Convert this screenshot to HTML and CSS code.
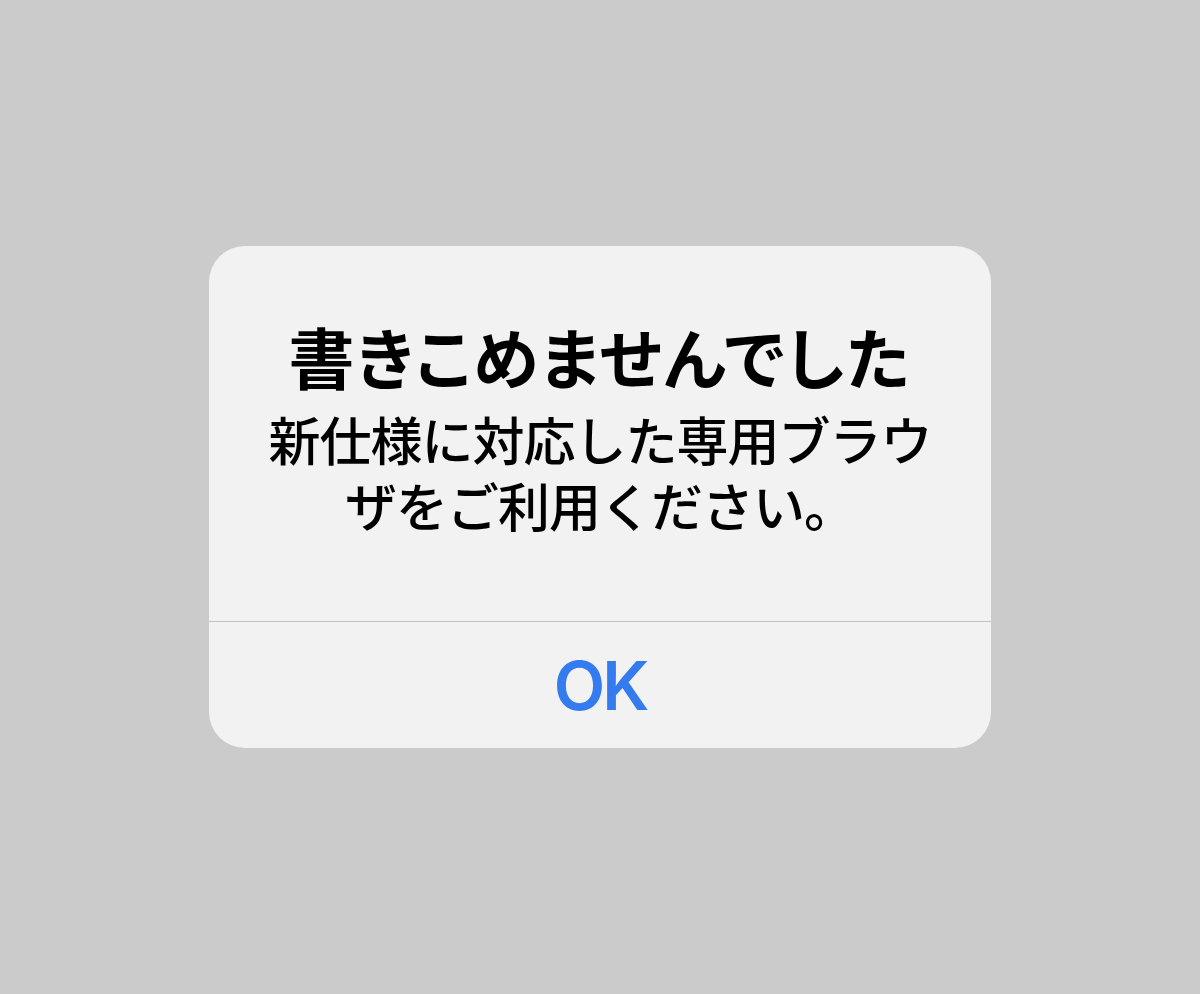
FILE: index.html
```html
<!DOCTYPE html>
<html lang="ja">

<head>
    <meta charset="UTF-8">
    <meta name="viewport" content="width=device-width, initial-scale=1.0">
    <link rel="stylesheet" href="styles.css">
    <title>Alert</title>
</head>

<body>

    <div class="alert">
        <div class="alert-content">
            <h1 class="alert-title">書きこめませんでした</h1>
            <p class="alert-message">新仕様に対応した専用ブラウ<br>ザをご利用ください。</p>
        </div>

        <button class="alert-button">OK</button>
    </div>

</body>

</html>
```

FILE: styles.css
```css
body {
    margin: 0;
    padding: 0;
    background-color: #cbcbcb;
    min-height: 100vh;
    display: flex;
    justify-content: center;
    align-items: center;
    font-family: "Noto Sans CJK JP", sans-serif;
}

.alert {
    width: 782px;
    background-color: #f2f2f2;
    border-radius: 36px;
    overflow: hidden;
    display: flex;
    flex-direction: column;
}

.alert-content {
    padding: 69px 20px 0;
    height: 306px;
    border-bottom: 1px solid #c2c2c2;
    text-align: center;
    color: #000;
}

.alert-title {
    margin: 0;
    font-size: 66px;
    line-height: 80px;
    font-weight: 700;
    font-feature-settings: "palt";
    letter-spacing: 2px;
}

.alert-message {
    margin: 11px 0 0;
    font-size: 52px;
    line-height: 66px;
    font-weight: 500;
    letter-spacing: -1px;
}

.alert-button {
    height: 126px;
    border: none;
    background: transparent;
    color: #357bf0;
    font-family: Inter, Roboto, sans-serif;
    font-size: 67px;
    font-weight: 600;
    letter-spacing: -3px;
    padding: 1px 0 0;
    cursor: pointer;
}
```
